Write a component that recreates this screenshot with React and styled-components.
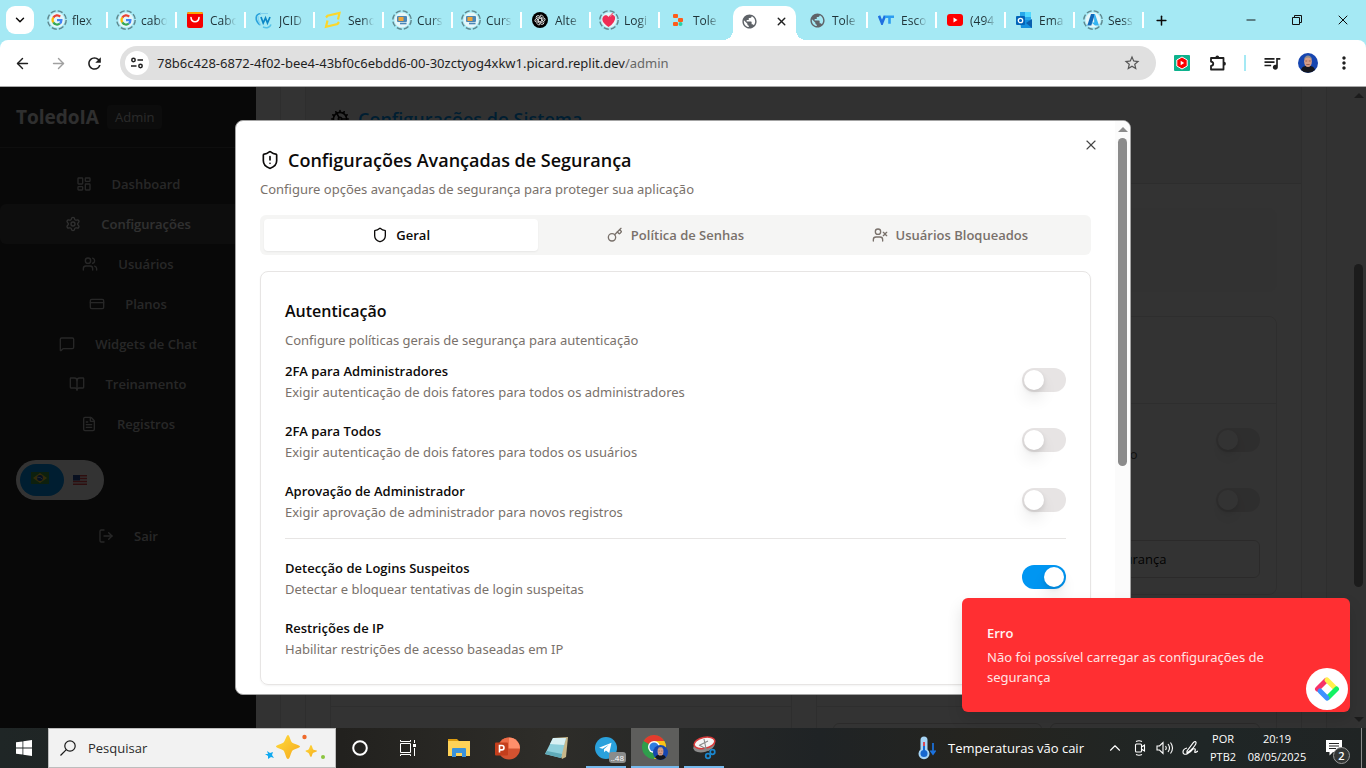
import React, { useState } from "react";
import styled, { createGlobalStyle, css } from "styled-components";
import {
  LayoutDashboard, Settings, Users, CreditCard, MessageSquare, BookOpen, FileText, LogOut,
  Cog, ShieldAlert, Shield, Key, UserX, X, ArrowLeft, ArrowRight, ChevronUp, ChevronDown, Plus, Minus,
} from "lucide-react";
import { MdRefresh, MdStarBorder, MdOutlineExtension, MdQueueMusic, MdMoreVert, MdPublic } from "react-icons/md";

const ui = '"Open Sans", "Noto Sans", sans-serif';
const reading = '"Noto Sans", "Open Sans", sans-serif';

const GlobalStyle = createGlobalStyle`
  *, *::before, *::after { box-sizing: border-box; }
  body { margin: 0; font-family: ${ui}; font-size: 13px; color: #0c0a09; overflow: hidden; }
  h1, h2, h3, p { margin: 0; }
  button, input { font: inherit; color: inherit; }
  button { border: 0; background: none; padding: 0; }
  svg { display: block; flex: none; }
`;

const Screen = styled.div`
  display: flex;
  flex-direction: column;
  height: 100vh;
  background: #a5e9f4;
`;

/* ---------- Browser chrome ---------- */

const TabStrip = styled.header`
  display: flex;
  align-items: center;
  height: 40px;
  padding-left: 6px;
`;

const TabSearch = styled.button`
  display: grid;
  place-items: center;
  width: 28px;
  height: 28px;
  border-radius: 9px;
  background: #fff;
  margin-right: 5px;
`;

const Tab = styled.button`
  position: relative;
  display: flex;
  align-items: center;
  gap: 5px;
  width: 69px;
  height: 28px;
  padding-left: 8px;
  color: #1f3338;
  font-size: 12px;
  border-right: 2px solid transparent;
  &::after {
    content: "";
    position: absolute;
    right: -2px;
    top: 6px;
    width: 2px;
    height: 16px;
    background: ${(p) => (p.$divider ? "#fff" : "transparent")};
  }
`;

const TabTitle = styled.span`
  width: 32px;
  white-space: nowrap;
  text-align: left;
  mask-image: linear-gradient(to right, #000 45%, transparent 82%);
`;

const ActiveTab = styled.div`
  position: relative;
  display: flex;
  align-items: center;
  justify-content: space-between;
  align-self: flex-end;
  width: 63px;
  height: 34px;
  margin: 0 3px 0 4px;
  padding: 0 8px 4px;
  border-radius: 10px 10px 0 0;
  background: #fff;
  color: #1f1f1f;
  &::before, &::after {
    content: "";
    position: absolute;
    bottom: 0;
    width: 10px;
    height: 10px;
  }
  &::before { left: -10px; background: radial-gradient(circle at 0 0, transparent 10px, #fff 10px); }
  &::after { right: -10px; background: radial-gradient(circle at 100% 0, transparent 10px, #fff 10px); }
`;

const IconSlot = styled.span`
  display: grid;
  place-items: center;
  flex: none;
  width: 20px;
  height: 20px;
`;

const NewTab = styled.button`
  display: grid;
  place-items: center;
  width: 28px;
  height: 28px;
  margin-left: 3px;
`;

const WindowControls = styled.div`
  display: flex;
  margin-left: auto;
`;

const WindowButton = styled.button`
  display: grid;
  place-items: center;
  width: 46px;
  height: 40px;
`;

const Toolbar = styled.nav`
  display: flex;
  align-items: center;
  height: 47px;
  padding: 0 4px;
  border-bottom: 1px solid #a8a8a8;
  border-radius: 8px 8px 0 0;
  background: #fff;
  color: #1f1f1f;
`;

const ToolButton = styled.button`
  display: grid;
  place-items: center;
  width: 36px;
  height: 34px;
  color: ${(p) => (p.$dim ? "#a0a0a0" : "#1f1f1f")};
`;

const AddressBar = styled.div`
  display: flex;
  align-items: center;
  flex: 1;
  height: 34px;
  margin: 0 8px;
  padding: 0 15px 0 5px;
  border-radius: 17px;
  background: #e0e0e0;
`;

const SiteInfo = styled.button`
  display: grid;
  place-items: center;
  width: 24px;
  height: 24px;
  border-radius: 50%;
  background: #fff;
  margin-right: 8px;
`;

const AddressInput = styled.input`
  field-sizing: content;
  border: 0;
  padding: 0;
  outline: 0;
  background: none;
  font-family: ${reading};
  font-size: 13px;
`;

const AddressPath = styled.span`
  flex: 1;
  color: #666;
  font-family: ${reading};
  font-size: 13px;
`;

const ToolDivider = styled.span`
  width: 2px;
  height: 16px;
  margin: 0 8px;
  background: #a5e9f4;
`;

/* ---------- Admin page ---------- */

const Viewport = styled.div`
  position: relative;
  display: flex;
  flex: 1;
  min-height: 0;
  overflow: hidden;
  background: #fff;
`;

const Sidebar = styled.aside`
  flex: none;
  width: 256px;
  background: #282828;
  color: #cfcfcf;
`;

const Brand = styled.div`
  display: flex;
  align-items: center;
  gap: 8px;
  height: 61px;
  padding: 0 16px;
  border-bottom: 1px solid #464646;
  font-size: 19px;
  font-weight: 700;
  color: #e8e8e8;
`;

const BrandBadge = styled.span`
  padding: 2px 8px;
  border-radius: 4px;
  background: #3c3c3c;
  color: #d0d0d0;
  font-size: 13px;
  line-height: 20px;
  font-weight: 400;
`;

const Nav = styled.nav`
  padding: 16px 0;
`;

const NavItem = styled.button`
  display: flex;
  align-items: center;
  justify-content: center;
  gap: 20px;
  width: 100%;
  height: 40px;
  border-radius: 6px;
  font-weight: 600;
  background: ${(p) => (p.$active ? "#414141" : "transparent")};
  color: ${(p) => (p.$active ? "#f0f0f0" : "#c4c4c4")};
`;

const LanguageSwitch = styled.div`
  display: flex;
  align-items: center;
  width: 88px;
  height: 40px;
  margin: 0 0 16px 16px;
  padding: 4px;
  border-radius: 20px;
  background: #fff;
`;

const Language = styled.button`
  display: flex;
  justify-content: center;
  align-items: center;
  width: ${(p) => (p.$active ? "44px" : "32px")};
  height: 32px;
  padding-bottom: ${(p) => (p.$active ? "4px" : "0")};
  padding-right: ${(p) => (p.$active ? "4px" : "0")};
  border-radius: 16px;
  background: ${(p) => (p.$active ? "#0096f2" : "transparent")};
`;

const Main = styled.main`
  flex: 1;
  min-width: 0;
  padding: 0 24px;
  background: #fbfbfb;
`;

const Frame = styled.div`
  height: 100%;
  padding: 0 24px;
  border: solid #e7e5e4;
  border-width: 0 1px;
  background: #fcfcfc;
  overflow: hidden;
`;

const SystemCard = styled.section`
  border: solid #e7e5e4;
  border-width: 0 1px;
  background: #fff;
`;

const SystemHeader = styled.div`
  height: 97px;
  padding: 16px 24px;
  border-bottom: 1px solid #e2e0df;
  background: #f6f6f6;
`;

const SystemTitle = styled.h1`
  display: flex;
  align-items: center;
  gap: 8px;
  font-size: 18px;
  line-height: 32px;
  font-weight: 600;
  color: #0096f2;
  svg { color: #0c0a09; }
`;

const SystemBody = styled.div`
  display: grid;
  grid-template-columns: 1fr 1fr;
  gap: 24px;
  padding: 24px;
`;

const Notice = styled.div`
  grid-column: 1 / -1;
  height: 84px;
  border: 1px solid #f7f7f7;
  border-radius: 8px;
  background: #fafafa;
`;

const Panel = styled.section`
  min-width: 0;
  border: 1px solid #e7e5e4;
  border-radius: 8px;
  background: #fff;
`;

const PanelHeader = styled.div`
  height: 87px;
  border-bottom: 1px solid #e7e5e4;
`;

const PanelBody = styled.div`
  display: flex;
  flex-wrap: wrap;
  gap: 20px 8px;
  padding: 16px;
`;

const PanelRow = styled.div`
  display: flex;
  align-items: center;
  justify-content: space-between;
  width: 100%;
  height: 40px;
  color: #57534e;
`;

const PanelLabel = styled.label`
  width: 305px;
  padding-top: 28px;
  line-height: 20px;
  text-align: right;
  white-space: nowrap;
`;

const PanelButton = styled.button`
  flex: 1;
  height: 38px;
  border: 1px solid #d6d3d1;
  border-radius: 6px;
`;

const Scrollbar = styled.div`
  display: flex;
  flex-direction: column;
  align-items: center;
  flex: none;
  width: 15px;
  padding: 6px 0;
  background: #fbfbfb;
  color: #8b8b8b;
`;

const Thumb = styled.span`
  width: 9px;
  height: ${(p) => p.$size};
  margin-top: ${(p) => p.$start};
  border-radius: 5px;
  background: currentColor;
`;

const Arrow = styled.span`
  border: 5px solid transparent;
  border-top-width: 0;
  border-bottom-color: currentColor;
  ${(p) => p.$down && css`
    margin-top: auto;
    transform: rotate(180deg);
  `}
`;

/* ---------- Dialog ---------- */

const Overlay = styled.div`
  position: absolute;
  inset: 0;
  display: flex;
  justify-content: center;
  padding: 33px 16px;
  background: rgba(0, 0, 0, 0.8);
`;

const Dialog = styled.section`
  position: relative;
  display: flex;
  width: 100%;
  max-width: 896px;
  border: 1px solid #a3a3a3;
  border-radius: 8px;
  background: #fff;
  overflow: hidden;
`;

const DialogContent = styled.div`
  flex: 1;
  min-width: 0;
  padding: 25px 24px 0;
`;

const DialogClose = styled.button`
  position: absolute;
  top: 16px;
  right: 31px;
  color: #444;
`;

const DialogTitle = styled.h2`
  display: flex;
  align-items: center;
  gap: 8px;
  font-size: 18px;
  line-height: 28px;
  font-weight: 600;
`;

const Muted = styled.p`
  margin-top: ${(p) => p.$gap};
  font-family: ${reading};
  line-height: 20px;
  color: #79716b;
`;

const TabList = styled.div`
  display: grid;
  grid-template-columns: repeat(3, 1fr);
  height: 40px;
  margin: 16px 0;
  padding: 4px;
  border-radius: 6px;
  background: #f5f5f4;
`;

const TabTrigger = styled.button`
  display: flex;
  align-items: center;
  justify-content: center;
  gap: 8px;
  border-radius: 4px;
  font-weight: 600;
  color: #79716b;
  ${(p) => p.$active && css`
    background: #fff;
    color: #0c0a09;
    box-shadow: 0 1px 2px rgba(0, 0, 0, 0.06);
  `}
`;

const Card = styled.div`
  padding: 24px;
  border: 1px solid #e7e5e4;
  border-radius: 8px;
  box-shadow: 0 1px 2px rgba(0, 0, 0, 0.05);
`;

const CardTitle = styled.h3`
  font-size: 16px;
  line-height: 30px;
  font-weight: 600;
`;

const Group = styled.div`
  display: flex;
  flex-direction: column;
  gap: 18px;
  padding-top: ${(p) => (p.$first ? "11px" : "19px")};
  padding-bottom: ${(p) => (p.$first ? "15px" : "0")};
  border-bottom: ${(p) => (p.$first ? "1px solid #e7e5e4" : "0")};
`;

const SettingRow = styled.div`
  display: flex;
  justify-content: space-between;
  height: 42px;
  input { margin-top: 7px; }
`;

const SettingLabel = styled.label`
  display: block;
  line-height: 20px;
  font-weight: 600;
`;

const SettingHint = styled.p`
  font-family: ${reading};
  line-height: 22px;
  color: #79716b;
`;

const Switch = styled.input.attrs({ type: "checkbox", role: "switch" })`
  appearance: none;
  display: flex;
  flex: none;
  width: 44px;
  height: 24px;
  margin: 0;
  padding: 2px;
  border-radius: 12px;
  background: #e7e4e4;
  &::before {
    content: "";
    width: 20px;
    height: 20px;
    border-radius: 50%;
    background: #fff;
    box-shadow: 0 10px 15px rgba(0, 0, 0, 0.08), 0 2px 5px rgba(0, 0, 0, 0.1);
  }
  &:checked { background: #0096f2; justify-content: flex-end; }
`;

/* ---------- Toast ---------- */

const Toast = styled.div`
  position: absolute;
  right: 16px;
  bottom: 16px;
  width: 388px;
  height: 114px;
  padding: 25px;
  border-radius: 6px;
  background: #ff2f32;
  color: #ffe4e4;
  font-family: ${reading};
  line-height: 20px;
  box-shadow: 0 8px 16px rgba(0, 0, 0, 0.12);
`;

const ToastTitle = styled.strong`
  display: block;
  margin-bottom: 4px;
  font-family: ${ui};
  font-weight: 600;
  color: #fff4f4;
`;

const FloatingBadge = styled.button`
  position: absolute;
  right: 2px;
  bottom: 2px;
  display: grid;
  place-items: center;
  width: 42px;
  height: 42px;
  border-radius: 50%;
  background: #fff;
`;

/* ---------- Taskbar ---------- */

const Taskbar = styled.footer`
  display: flex;
  flex: none;
  height: 40px;
  background: linear-gradient(90deg, #1f2626 0, #22211e 25%, #2e2d29 40%, #1f2325 60%, #25241f 72%, #1f2626 88%, #202424 100%);
  color: #fff;
`;

const TaskButton = styled.button`
  position: relative;
  display: grid;
  place-items: center;
  width: ${(p) => (p.$wide ? "49px" : "48px")};
  background: ${(p) => (p.$active ? "linear-gradient(90deg, transparent 1px, #5e5e5c 1px)" : "none")};
  &::after {
    content: "";
    position: absolute;
    bottom: 0;
    left: ${(p) => (p.$active ? "1px" : "5px")};
    right: ${(p) => (p.$active ? "0" : "4px")};
    height: 2px;
    background: ${(p) => (p.$open ? "#76b9ed" : "transparent")};
  }
`;

const SearchBox = styled.label`
  display: flex;
  align-items: center;
  gap: 12px;
  width: 288px;
  padding: 0 9px 0 11px;
  border: 1px solid #bdbdbd;
  background: #f2f2f2;
  color: #222;
`;

const SearchInput = styled.input`
  flex: 1;
  min-width: 0;
  border: 0;
  padding: 0;
  background: none;
  outline: 0;
  font-size: 13px;
  &::placeholder { color: #2b2b2b; opacity: 1; }
`;

const PinnedApps = styled.div`
  display: flex;
  margin-left: 2px;
`;

const Counter = styled.span`
  position: absolute;
  right: 4px;
  bottom: 5px;
  padding: 0 2px;
  border-radius: 3px;
  background: #8a8c8c;
  font-size: 8px;
  line-height: 11px;
`;

const Tray = styled.div`
  display: flex;
  align-items: center;
  margin-left: auto;
  padding-right: 4px;
`;

const Weather = styled.button`
  display: flex;
  align-items: center;
  gap: 12px;
  width: 184px;
  font-size: 13px;
  white-space: nowrap;
`;

const TrayButton = styled.button`
  display: grid;
  place-items: center;
  width: 25px;
  height: 40px;
`;

const TrayText = styled.button`
  width: ${(p) => p.$width};
  font-size: 11px;
  line-height: 18px;
  text-align: center;
`;

const Notifications = styled.button`
  position: relative;
  display: grid;
  place-items: center;
  width: 48px;
  height: 40px;
  margin-right: 3px;
`;

const NotificationCount = styled.span`
  position: absolute;
  right: 8px;
  bottom: 4px;
  width: 17px;
  height: 17px;
  border: 1px solid #9a9a9a;
  border-radius: 50%;
  background: #333635;
  font-size: 11px;
  font-weight: 600;
  line-height: 15px;
`;

const DesktopEdge = styled.span`
  width: 1px;
  height: 40px;
  background: #8a8a8a;
`;

/* ---------- Drawings ---------- */

const Ring = ({ children }) => (
  <svg width="20" height="20" viewBox="0 0 20 20">
    <circle cx="10" cy="10" r="9.2" fill="none" stroke="#5f878e" strokeWidth="1.4" strokeDasharray="5.2 2.1" />
    <circle cx="10" cy="10" r="7.6" fill="#e6f6f8" />
    {children}
  </svg>
);

const GoogleIcon = () => (
  <Ring>
    <g fill="none" strokeWidth="2.2">
      <path d="M13.2 6.6A4.4 4.4 0 0 0 6.3 7.6" stroke="#ea4335" />
      <path d="M6.3 7.6a4.4 4.4 0 0 0 0 4.8" stroke="#fbbc05" />
      <path d="M6.3 12.4a4.4 4.4 0 0 0 6.6 1.1" stroke="#34a853" />
      <path d="M12.9 13.5A4.4 4.4 0 0 0 14.4 10.2H10" stroke="#4285f4" />
    </g>
  </Ring>
);

const ShopIcon = () => (
  <svg width="16" height="16" viewBox="0 0 16 16">
    <rect width="16" height="16" rx="2" fill="#f60000" />
    <path d="M0 2q0-2 2-2h12q2 0 2 2z" fill="#ffa000" />
    <path d="M4 5.5c.4 5.6 7.6 5.6 8 0" fill="none" stroke="#fff" strokeWidth="1.6" strokeLinecap="round" />
  </svg>
);

const WIcon = () => (
  <svg width="18" height="18" viewBox="0 0 18 18" fill="none">
    <path d="M5 14C-.5 9 0 3 6 2.500" stroke="#2aa2dc" strokeWidth="1.600" />
    <path d="M3 5c0 4 1 7 3 9.500M5 2.500h8" stroke="#7fd0ee" strokeWidth="1.200" />
    <path d="m6 6 2.200 6L10.500 7l2 5L15 6" stroke="#0c87c6" strokeWidth="1.700" />
    <path d="M8 16c3.500 1.500 7 .5 8-2.500" stroke="#53c1e8" strokeWidth="1.500" />
  </svg>
);

const YellowIcon = () => (
  <svg width="18" height="18" viewBox="0 0 18 18" fill="none" stroke="#fcd72b" strokeWidth="2.2">
    <path d="M2 6.500 3.500 4.800 15.500 2 14 8.500" />
    <path d="M3.500 9.500 2 15.800 13.500 13l1.500-2" />
  </svg>
);

const CourseIcon = () => (
  <Ring>
    <rect x="5" y="6" width="10" height="6" rx="1" fill="#4c86b5" />
    <rect x="6.5" y="7" width="5" height="4" fill="#f0a43c" />
    <path d="M8 13.500h6.500" stroke="#4c86b5" strokeWidth="1.600" />
  </Ring>
);

const KnotIcon = () => (
  <svg width="16" height="16" viewBox="0 0 16 16">
    <circle cx="8" cy="8" r="8" fill="#000" />
    <g fill="none" stroke="#fff" strokeWidth=".8">
      {[0, 60, 120, 180, 240, 300].map((a) => (
        <path key={a} d="M8 3.4a2.200 2.200 0 0 1 3 1v3.800L8 10" transform={`rotate(${a} 8 8)`} />
      ))}
    </g>
  </svg>
);

const HeartIcon = () => (
  <Ring>
    <path d="M9.500 17C3.500 13 2.500 9.500 4 7c1.500-2.500 4.500-2 5.500 0 1-2.300 5-2.800 6.300-.5C17.300 9.500 13.500 15 9.500 17z" fill="#ef2c55" />
    <path d="M11 6.500 14 3" stroke="#ef6b86" strokeWidth="1.400" />
  </Ring>
);

const ReplitIcon = () => (
  <svg width="12" height="14" viewBox="0 0 12 14">
    <rect x="1" y="1" width="5" height="4" rx="1" fill="#ff5c1a" />
    <rect x="6" y="5" width="5" height="4" rx="1" fill="#ff5c1a" />
    <rect x="1" y="9" width="5" height="4" rx="1" fill="#ff5c1a" />
    <circle cx="8.500" cy="11" r="2" fill="#2ad1a3" />
  </svg>
);

const VtIcon = () => (
  <svg width="16" height="10" viewBox="0 0 16 10" fill="none" strokeWidth="2.600">
    <path d="m1 .8 3 7.400 3-7.400" stroke="#1f6fe0" />
    <path d="M7 1.800h9M11.500 1.800v7" stroke="#2b9cf0" />
  </svg>
);

const YoutubeIcon = () => (
  <svg width="16" height="12" viewBox="0 0 16 12">
    <rect width="16" height="12" rx="3" fill="#f00" />
    <path d="M6.500 3.500v5l4-2.500z" fill="#fff" />
  </svg>
);

const OutlookIcon = () => (
  <svg width="16" height="16" viewBox="0 0 16 16">
    <rect x="4" width="11" height="10" fill="#28a8ea" />
    <path d="M9 0h6v5H9z" fill="#50d9ff" />
    <path d="M4 8l12 0v8H5z" fill="#1490df" />
    <path d="m16 7-6 4 6 5z" fill="#0a5fae" />
    <rect y="4" width="9" height="9" rx="1" fill="#0364b8" />
    <circle cx="4.500" cy="8.500" r="2.200" fill="none" stroke="#fff" strokeWidth="1.300" />
  </svg>
);

const AzureIcon = () => (
  <Ring>
    <path d="M8 4h4L8.300 15.500H4.300z" fill="#1268b8" />
    <path d="M11 4h1l4 11.500h-4L8.500 12.500h2.700z" fill="#35b4f2" />
  </Ring>
);

const TuneIcon = () => (
  <svg width="14" height="14" viewBox="0 0 14 14" fill="none" stroke="#1f1f1f" strokeWidth="1.500">
    <circle cx="3.500" cy="4" r="1.700" />
    <path d="M7.500 4H13M1 10h5.500" />
    <circle cx="10.500" cy="10" r="1.700" />
  </svg>
);

const RestoreIcon = () => (
  <svg width="10" height="10" viewBox="0 0 10 10" fill="none" stroke="#111">
    <path d="M.5 2.500h7v7h-7zM2.500 2.500v-2h7v7h-2" />
  </svg>
);

const RecorderIcon = () => (
  <svg width="16" height="16" viewBox="0 0 16 16">
    <rect width="16" height="16" rx="1" fill="#0db28d" />
    <path d="m8 2 5.200 3v6L8 14l-5.200-3V5z" fill="#f00" stroke="#fff" strokeWidth="1" strokeLinejoin="round" />
    <path d="M6.700 5.800v4.400l3.500-2.200z" fill="#fff" />
  </svg>
);

const PuzzleIcon = () => (
  <svg width="18" height="18" viewBox="0 0 18 18">
    <path d="M2 4h12.500v11.500H2v-3.600c3-.3 3-4 0-4.300z" fill="none" stroke="#1f1f1f" strokeWidth="1.800" strokeLinejoin="round" />
    <path d="M6.400 3.500a1.900 1.900 0 0 1 3.800 0zM15 7.800a1.900 1.900 0 0 1 0 3.800z" fill="#1f1f1f" />
  </svg>
);

const Avatar = ({ size }) => (
  <svg width={size} height={size} viewBox="0 0 20 20">
    <circle cx="10" cy="10" r="10" fill="#1746b0" />
    <path d="M3 17c1-4 4-4 7-4s6 0 7 4a10 10 0 0 1-14 0z" fill="#15171f" />
    <ellipse cx="10" cy="8.500" rx="3.900" ry="5.600" fill="#d59d86" />
    <path d="M6.100 7c0-6 7.800-6 7.800 0-1-3.500-6.800-3.500-7.800 0z" fill="#8f8c8c" />
    <path d="M7.300 8h1.900M10.800 8h1.900M8.300 11.500h3.400" stroke="#8a5347" strokeWidth=".8" />
  </svg>
);

const BrazilFlag = () => (
  <svg width="18" height="12" viewBox="0 0 18 12">
    <rect width="18" height="12" fill="#43a047" />
    <path d="m9 1 7 5-7 5-7-5z" fill="#fdd835" />
    <circle cx="9" cy="6" r="2.900" fill="#1c4fa3" />
    <path d="M6.400 5.300q3-.5 5 1.800" stroke="#fff" strokeWidth=".7" fill="none" />
  </svg>
);

const UsFlag = () => (
  <svg width="14" height="10" viewBox="0 0 14 10">
    <rect width="14" height="10" fill="#f5f5f5" />
    <path d="M0 .8h14M0 3.600h14M0 6.400h14M0 9.200h14" stroke="#e5484d" strokeWidth="1.500" />
    <rect width="7" height="5.500" fill="#2a4fa0" />
  </svg>
);

const PinwheelIcon = () => (
  <svg width="26" height="26" viewBox="0 0 26 26" fill="none" strokeWidth="5" strokeLinecap="round">
    <path d="M3.500 13 12 4.500" stroke="#f73267" />
    <path d="m13 4 8 8" stroke="#fff04c" />
    <path d="M22.500 13 14 21.500" stroke="#12f263" />
    <path d="m13 22-7-7" stroke="#3c91ff" />
  </svg>
);

const WindowsIcon = () => (
  <svg width="16" height="16" viewBox="0 0 16 16" fill="#fff">
    <path d="M0 2.300 6.500 1.400v6.200H0zM7.300 1.300 16 0v7.600H7.300zM0 8.400h6.500v6.200L0 13.700zM7.300 8.400H16V16l-8.700-1.300z" />
  </svg>
);

const SearchGlass = () => (
  <svg width="16" height="16" viewBox="0 0 16 16" fill="none" stroke="#1a1a1a" strokeWidth="1.200">
    <circle cx="10" cy="6" r="5.200" />
    <path d="M6.300 9.700.5 15.500" />
  </svg>
);

const SparklesIcon = () => (
  <svg width="62" height="28" viewBox="0 0 62 28">
    <defs>
      <linearGradient id="gold" x1="0" y1="0" x2="1" y2="1">
        <stop offset="0" stopColor="#ffdc3d" />
        <stop offset="1" stopColor="#f5a81c" />
      </linearGradient>
    </defs>
    <path d="M24 1c1.500 0 2.500 6 4 7.500S36 11 36 12.500 30 15 28.500 16.500 26 25 24 25s-3-7-4.500-8.500S12 14 12 12.500 18 10 19.500 8.500 22.500 1 24 1z" fill="url(#gold)" />
    <path d="M47 11c1 0 1.500 4 2.500 4.700S53 16 53 17s-3 1-4 2-1 4-2 4-1.500-3-2.500-4-3-1-3-2 2-.5 3-1.500S46 11 47 11z" fill="url(#gold)" />
    <path d="m3 17 3 2 3-1-1 3 2 3-3-1-3 2v-3l-3-2h3z" fill="#11a9f0" />
    <circle cx="40.500" cy="3" r="2.200" fill="#ee6a2c" />
    <circle cx="59" cy="23" r="2" fill="#8bc53f" />
  </svg>
);

const CortanaIcon = () => (
  <svg width="16" height="16" viewBox="0 0 16 16">
    <circle cx="8" cy="8" r="6.800" fill="none" stroke="#fff" strokeWidth="2" />
  </svg>
);

const TaskViewIcon = () => (
  <svg width="16" height="16" viewBox="0 0 16 16" fill="none" stroke="#fff">
    <path d="M.5 3.500h10v9H.5zM.5 0v1.500h10V0M.5 16v-1.500h10V16M14.500 0v3M14.500 8v8" />
    <rect x="13" y="4" width="3" height="3" fill="#fff" stroke="none" />
  </svg>
);

const ExplorerIcon = () => (
  <svg width="22" height="20" viewBox="0 0 22 20">
    <path d="M0 1h9l2 2H0z" fill="#dd9c10" />
    <path d="M0 3h22v15H0z" fill="#ffd257" />
    <path d="M4 19v-8q0-1 1-1h12q1 0 1 1v8h-4v-4H8v4z" fill="#3b92da" />
  </svg>
);

const PowerPointIcon = () => (
  <svg width="25" height="23" viewBox="0 0 25 23">
    <circle cx="14" cy="11.500" r="11" fill="#d35230" />
    <path d="M14 .5a11 11 0 0 1 11 11H14z" fill="#ff8f6b" />
    <path d="M3 11.500a11 11 0 0 1 11-11v11z" fill="#ed6c47" />
    <rect y="5.500" width="13" height="13" rx="1" fill="#c43e1c" />
    <path d="M4.500 15.500v-7h2.300a2.200 2.200 0 0 1 0 4.400H4.500" fill="none" stroke="#fff" strokeWidth="1.600" />
  </svg>
);

const NotepadIcon = () => (
  <svg width="24" height="24" viewBox="0 0 24 24">
    <path d="m8 2 15-1-2 20-4 2z" fill="#c7b78a" />
    <path d="M8 2h13l-5 20L0 18z" fill="#8fcfdb" />
    <path d="M8 2h13l-2 7-14-1z" fill="#d9f0f3" />
    <path d="m2 15 15 3-1 4L0 18z" fill="#5faab8" />
  </svg>
);

const TelegramIcon = () => (
  <svg width="22" height="22" viewBox="0 0 22 22">
    <circle cx="11" cy="11" r="11" fill="#2aa1dc" />
    <path d="m4 10.800 12.500-5L14.300 16l-3.400-2.500-1.700 1.700-.3-3 5-4.500-6.300 4z" fill="#fff" />
  </svg>
);

const ChromeIcon = () => (
  <svg width="26" height="26" viewBox="0 0 26 26">
    <circle cx="12" cy="12" r="12" fill="#2f9e4c" />
    <path d="M12 12 1.600 6A12 12 0 0 1 22.400 6z" fill="#e33b2e" />
    <path d="M12 6h10.400A12 12 0 0 1 12 24l5-9z" fill="#fbc116" />
    <circle cx="12" cy="12" r="6" fill="#fff" />
    <circle cx="12" cy="12" r="4.600" fill="#2f7de1" />
    <svg x="11" y="10" width="15" height="15" viewBox="0 0 20 20">
      <Avatar size={20} />
    </svg>
  </svg>
);

const SnipIcon = () => (
  <svg width="24" height="24" viewBox="0 0 24 24" fill="none">
    <ellipse cx="12" cy="10" rx="11" ry="6" fill="#8b8b8b" transform="rotate(-15 12 10)" />
    <ellipse cx="12.500" cy="7" rx="10.500" ry="5.500" fill="#f5f5f5" stroke="#d83b3b" strokeWidth="1.500" transform="rotate(-12 12 7)" />
    <path d="m12 3 2.500 12M7 9l10 5.500M8 9l8-4" stroke="#888" strokeWidth="1.100" />
    <circle cx="16" cy="20" r="2.300" stroke="#1a87cf" strokeWidth="1.700" />
    <circle cx="20.500" cy="16" r="2.300" stroke="#1a87cf" strokeWidth="1.700" />
  </svg>
);

const ThermometerIcon = () => (
  <svg width="18" height="24" viewBox="0 0 18 24">
    <path d="M2.500 4a3.500 3.500 0 0 1 7 0v9.500a5.500 5.500 0 1 1-7 0z" fill="#a6d4f5" />
    <circle cx="6" cy="17.500" r="3.500" fill="#1667cf" />
    <path d="M6 6v4" stroke="#d94a58" strokeWidth="2" />
    <path d="M6 10v6" stroke="#1667cf" strokeWidth="2" />
    <path d="M15 7v10m-2.500-2.500L15 18l2.500-3.500" fill="none" stroke="#1b73e0" strokeWidth="1.700" />
  </svg>
);

const MeetIcon = () => (
  <svg width="14" height="16" viewBox="0 0 14 16" fill="none" stroke="#fff" strokeWidth="1.100">
    <path d="M2.500 5q0-1 1-1h4q1 0 1 1v6q0 1-1 1h-4q-1 0-1-1zM8.500 7l3-2v6l-3-2M3 1.500q3-1.500 6 0M3 14.500q3 1.500 6 0" />
  </svg>
);

const VolumeIcon = () => (
  <svg width="18" height="14" viewBox="0 0 18 14" fill="none" stroke="#fff" strokeWidth="1.100">
    <path d="M1 5h2.500L7 1.500v11L3.500 9H1zM9.500 5q1.500 2 0 4M12 3q3 4 0 8M14.500 1.500q4 5.500 0 11" />
  </svg>
);

const PenIcon = () => (
  <svg width="16" height="16" viewBox="0 0 16 16" fill="none" stroke="#fff" strokeWidth="1.200">
    <path d="m5 11 6.500-8.500q2-2 2.500 0T9 10l-4 3zM5 8Q1 9 1 12t4 2q4-2 6-5 3-1 2 2t3 0" />
  </svg>
);

const NoteIcon = () => (
  <svg width="16" height="16" viewBox="0 0 16 16">
    <path d="M0 0h16v12H7l-3.500 3.500V12H0z" fill="#fff" />
    <path d="M3 3.500h10M3 6h10M3 8.500h7" stroke="#222" />
  </svg>
);

/* ---------- Content ---------- */

const tabs = [
  { icon: <GoogleIcon />, title: "flex" },
  { icon: <GoogleIcon />, title: "cabo" },
  { icon: <ShopIcon />, title: "Cabo" },
  { icon: <WIcon />, title: "JCID" },
  { icon: <YellowIcon />, title: "Send" },
  { icon: <CourseIcon />, title: "Curs" },
  { icon: <CourseIcon />, title: "Curs" },
  { icon: <KnotIcon />, title: "Alte" },
  { icon: <HeartIcon />, title: "Logi" },
  { icon: <ReplitIcon />, title: "Tole", noDivider: true },
  { active: true },
  { icon: <MdPublic size={17} color="#5f6368" />, title: "Tole" },
  { icon: <VtIcon />, title: "Esco" },
  { icon: <YoutubeIcon />, title: "(494" },
  { icon: <OutlookIcon />, title: "Ema" },
  { icon: <AzureIcon />, title: "Sess" },
];

const navItems = [
  { icon: LayoutDashboard, label: "Dashboard" },
  { icon: Settings, label: "Configurações", active: true },
  { icon: Users, label: "Usuários" },
  { icon: CreditCard, label: "Planos" },
  { icon: MessageSquare, label: "Widgets de Chat" },
  { icon: BookOpen, label: "Treinamento" },
  { icon: FileText, label: "Registros" },
];

const authSettings = [
  { id: "admin2fa", label: "2FA para Administradores", hint: "Exigir autenticação de dois fatores para todos os administradores" },
  { id: "all2fa", label: "2FA para Todos", hint: "Exigir autenticação de dois fatores para todos os usuários" },
  { id: "approval", label: "Aprovação de Administrador", hint: "Exigir aprovação de administrador para novos registros" },
];

const accessSettings = [
  { id: "suspicious", label: "Detecção de Logins Suspeitos", hint: "Detectar e bloquear tentativas de login suspeitas" },
  { id: "ip", label: "Restrições de IP", hint: "Habilitar restrições de acesso baseadas em IP" },
];

const sections = [
  { icon: Shield, label: "Geral" },
  { icon: Key, label: "Política de Senhas" },
  { icon: UserX, label: "Usuários Bloqueados" },
];

function BrowserChrome() {
  return (
    <>
      <TabStrip>
        <TabSearch aria-label="Pesquisar guias"><ChevronDown size={14} strokeWidth={2.5} /></TabSearch>
        {tabs.map((tab, i) =>
          tab.active ? (
            <ActiveTab key={i}>
              <MdPublic size={17} color="#5f6368" />
              <button aria-label="Fechar guia"><X size={13} strokeWidth={2.6} /></button>
            </ActiveTab>
          ) : (
            <Tab key={i} $divider={!tab.noDivider}>
              <IconSlot>{tab.icon}</IconSlot>
              <TabTitle>{tab.title}</TabTitle>
            </Tab>
          )
        )}
        <NewTab aria-label="Nova guia"><Plus size={15} strokeWidth={2.4} /></NewTab>
        <WindowControls>
          <WindowButton aria-label="Minimizar"><Minus size={14} strokeWidth={1.6} /></WindowButton>
          <WindowButton aria-label="Restaurar"><RestoreIcon /></WindowButton>
          <WindowButton aria-label="Fechar"><X size={16} strokeWidth={1.5} /></WindowButton>
        </WindowControls>
      </TabStrip>
      <Toolbar>
        <ToolButton aria-label="Voltar"><ArrowLeft size={17} /></ToolButton>
        <ToolButton $dim aria-label="Avançar"><ArrowRight size={17} /></ToolButton>
        <ToolButton aria-label="Recarregar"><MdRefresh size={19} /></ToolButton>
        <AddressBar>
          <SiteInfo aria-label="Informações do site"><TuneIcon /></SiteInfo>
          <AddressInput
            aria-label="Endereço"
            defaultValue="78b6c428-6872-4f02-bee4-43bf0c6ebdd6-00-30zctyog4xkw1.picard.replit.dev"
          />
          <AddressPath>/admin</AddressPath>
          <button aria-label="Favoritar"><MdStarBorder size={18} color="#555" /></button>
        </AddressBar>
        <ToolButton aria-label="Gravador"><RecorderIcon /></ToolButton>
        <ToolButton aria-label="Extensões"><PuzzleIcon /></ToolButton>
        <ToolDivider />
        <ToolButton aria-label="Mídia"><MdQueueMusic size={20} /></ToolButton>
        <ToolButton aria-label="Perfil"><Avatar size={20} /></ToolButton>
        <ToolButton aria-label="Menu"><MdMoreVert size={20} /></ToolButton>
      </Toolbar>
    </>
  );
}

function AdminPage() {
  return (
    <>
      <Sidebar>
        <Brand>ToledoIA<BrandBadge>Admin</BrandBadge></Brand>
        <Nav>
          {navItems.map(({ icon: Icon, label, active }) => (
            <NavItem key={label} $active={active}><Icon size={16} />{label}</NavItem>
          ))}
        </Nav>
        <LanguageSwitch>
          <Language $active aria-label="Português"><BrazilFlag /></Language>
          <Language aria-label="English"><UsFlag /></Language>
        </LanguageSwitch>
        <NavItem><LogOut size={16} />Sair</NavItem>
      </Sidebar>
      <Main>
        <Frame>
          <SystemCard>
            <SystemHeader>
              <SystemTitle><Cog size={20} />Configurações do Sistema</SystemTitle>
            </SystemHeader>
            <SystemBody>
              <Notice />
              <Panel><PanelHeader /></Panel>
              <Panel>
                <PanelHeader />
                <PanelBody>
                  <PanelRow>
                    <PanelLabel htmlFor="twoFactor">Exigir segundo fator de verificação</PanelLabel>
                    <Switch id="twoFactor" />
                  </PanelRow>
                  <PanelRow>
                    <span />
                    <Switch aria-label="Aprovação" />
                  </PanelRow>
                  <PanelButton>Configurações Avançadas de Segurança</PanelButton>
                </PanelBody>
              </Panel>
              <Panel><PanelHeader /></Panel>
              <Panel>
                <PanelHeader />
                <PanelBody>
                  <PanelButton />
                  <PanelButton />
                </PanelBody>
              </Panel>
            </SystemBody>
          </SystemCard>
        </Frame>
      </Main>
      <Scrollbar>
        <Arrow />
        <Thumb $size="51.4%" $start="166px" />
        <Arrow $down />
      </Scrollbar>
    </>
  );
}

function Setting({ id, label, hint, checked, onChange }) {
  return (
    <SettingRow>
      <div>
        <SettingLabel htmlFor={id}>{label}</SettingLabel>
        <SettingHint>{hint}</SettingHint>
      </div>
      <Switch id={id} checked={checked} onChange={onChange} />
    </SettingRow>
  );
}

function SecurityDialog() {
  const [section, setSection] = useState("Geral");
  const [values, setValues] = useState({ suspicious: true });
  const renderSetting = (s) => (
    <Setting
      key={s.id}
      {...s}
      checked={!!values[s.id]}
      onChange={() => setValues({ ...values, [s.id]: !values[s.id] })}
    />
  );
  return (
    <Overlay>
      <Dialog role="dialog" aria-labelledby="security-title">
        <DialogContent>
          <DialogTitle id="security-title"><ShieldAlert size={20} />Configurações Avançadas de Segurança</DialogTitle>
          <Muted $gap="5px">Configure opções avançadas de segurança para proteger sua aplicação</Muted>
          <TabList role="tablist">
            {sections.map(({ icon: Icon, label }) => (
              <TabTrigger
                key={label}
                role="tab"
                aria-selected={section === label}
                $active={section === label}
                onClick={() => setSection(label)}
              >
                <Icon size={16} />{label}
              </TabTrigger>
            ))}
          </TabList>
          <Card>
            <CardTitle>Autenticação</CardTitle>
            <Muted $gap="4px">Configure políticas gerais de segurança para autenticação</Muted>
            <Group $first>{authSettings.map(renderSetting)}</Group>
            <Group>{accessSettings.map(renderSetting)}</Group>
          </Card>
        </DialogContent>
        <Scrollbar>
          <Arrow />
          <Thumb $size="58.5%" $start="6px" />
        </Scrollbar>
        <DialogClose aria-label="Fechar"><X size={16} strokeWidth={1.7} /></DialogClose>
      </Dialog>
    </Overlay>
  );
}

function WindowsTaskbar() {
  return (
    <Taskbar>
      <TaskButton aria-label="Iniciar"><WindowsIcon /></TaskButton>
      <SearchBox>
        <SearchGlass />
        <SearchInput placeholder="Pesquisar" />
        <SparklesIcon />
      </SearchBox>
      <TaskButton aria-label="Cortana"><CortanaIcon /></TaskButton>
      <TaskButton aria-label="Visão de tarefas"><TaskViewIcon /></TaskButton>
      <PinnedApps>
        <TaskButton $wide aria-label="Explorador"><ExplorerIcon /></TaskButton>
        <TaskButton $wide aria-label="PowerPoint"><PowerPointIcon /></TaskButton>
        <TaskButton $wide aria-label="Bloco de notas"><NotepadIcon /></TaskButton>
        <TaskButton $wide $open aria-label="Telegram"><TelegramIcon /><Counter>..48</Counter></TaskButton>
        <TaskButton $wide $open $active aria-label="Chrome"><ChromeIcon /></TaskButton>
        <TaskButton $wide $open aria-label="Captura"><SnipIcon /></TaskButton>
      </PinnedApps>
      <Tray>
        <Weather><ThermometerIcon />Temperaturas vão cair</Weather>
        <TrayButton aria-label="Mostrar ícones"><ChevronUp size={18} strokeWidth={1.5} /></TrayButton>
        <TrayButton aria-label="Câmera"><MeetIcon /></TrayButton>
        <TrayButton aria-label="Volume"><VolumeIcon /></TrayButton>
        <TrayButton aria-label="Caneta"><PenIcon /></TrayButton>
        <TrayText $width="42px">POR<br />PTB2</TrayText>
        <TrayText $width="66px">20:19<br />08/05/2025</TrayText>
        <Notifications aria-label="Notificações"><NoteIcon /><NotificationCount>2</NotificationCount></Notifications>
        <DesktopEdge />
      </Tray>
    </Taskbar>
  );
}

export default function App() {
  return (
    <Screen>
      <GlobalStyle />
      <BrowserChrome />
      <Viewport>
        <AdminPage />
        <SecurityDialog />
        <Toast role="alert">
          <ToastTitle>Erro</ToastTitle>
          Não foi possível carregar as configurações de segurança
          <FloatingBadge aria-label="Assistente"><PinwheelIcon /></FloatingBadge>
        </Toast>
      </Viewport>
      <WindowsTaskbar />
    </Screen>
  );
}
